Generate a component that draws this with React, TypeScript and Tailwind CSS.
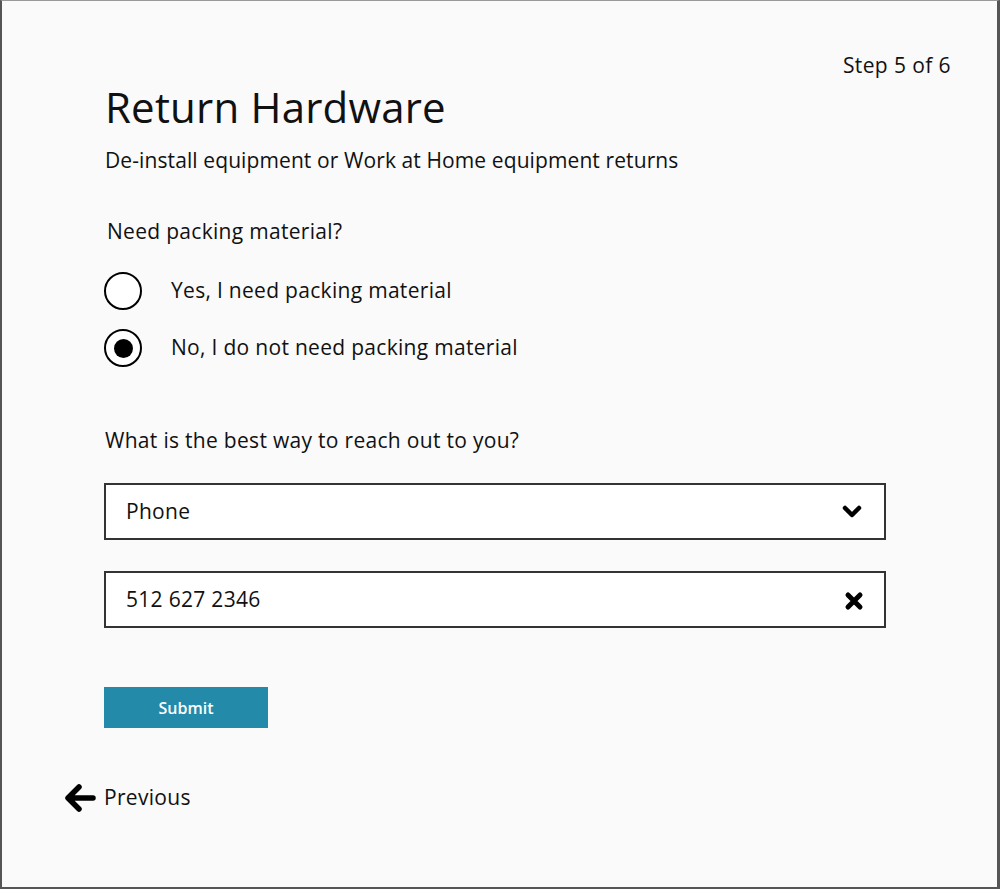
import React, { useState } from 'react'

const font = { fontFamily: '"Open Sans", Arial, sans-serif' }

const Radio = ({ checked, label, onClick }: { checked: boolean; label: string; onClick: () => void }) => (
    <button type="button" onClick={onClick} className="flex items-center gap-[29px] h-[40px]">
        <span className="w-[38px] h-[38px] rounded-full border-2 border-black flex items-center justify-center bg-white">
            {checked && <span className="w-[19px] h-[19px] rounded-full bg-black" />}
        </span>
        <span className="text-[21px] tracking-[0.3px] text-[#111]">{label}</span>
    </button>
)

export default function App() {
    const [packing, setPacking] = useState('no')

    return (
        <div style={font} className="w-[1000px] h-[889px] bg-[#fafafa] border-l-2 border-r-[3px] border-b-[2px] border-t border-l-[#555] border-r-[#555] border-b-[#555] border-t-[#999] flex flex-col text-[#111] tracking-[0.3px]">
            <div className="flex justify-end pr-[46px] pt-[51px]">
                <p className="text-[21px] leading-[26px] tracking-[0.4px]">Step 5 of 6</p>
            </div>

            <div className="pl-[103px] flex flex-col">
                <h1 className="text-[42px] leading-[48px] mt-[5px] tracking-[0.2px]">Return Hardware</h1>
                <p className="text-[21px] leading-[26px] mt-[16px] tracking-[0.1px]">De-install equipment or Work at Home equipment returns</p>

                <p className="text-[21px] leading-[26px] mt-[45px] pl-[2px]">Need packing material?</p>

                <div className="flex flex-col gap-[17px] mt-[27px] -ml-px">
                    <Radio checked={packing === 'yes'} label="Yes, I need packing material" onClick={() => setPacking('yes')} />
                    <Radio checked={packing === 'no'} label="No, I do not need packing material" onClick={() => setPacking('no')} />
                </div>

                <p className="text-[21px] leading-[26px] mt-[59px]">What is the best way to reach out to you?</p>

                {/* contact select */}
                <div className="mt-[30px] -ml-px w-[782px] h-[57px] border-2 border-[#333] bg-white flex items-center justify-between pl-[20px] pr-[22px]">
                    <span className="text-[21px]">Phone</span>
                    <svg width="20" height="14" viewBox="0 0 20 14">
                        <path d="M3 3 L10 10 L17 3" fill="none" stroke="#000" strokeWidth="4.5" strokeLinecap="round" strokeLinejoin="round" />
                    </svg>
                </div>

                {/* phone input */}
                <div className="mt-[31px] -ml-px w-[782px] h-[57px] border-2 border-[#333] bg-white flex items-center justify-between pl-[20px] pr-[20px]">
                    <span className="text-[21px]">512 627 2346</span>
                    <svg width="20" height="20" viewBox="0 0 20 20" className="mt-[3px]">
                        <path d="M4 4 L16 16 M16 4 L4 16" fill="none" stroke="#000" strokeWidth="5" strokeLinecap="round" />
                    </svg>
                </div>

                <button className="mt-[59px] -ml-px w-[164px] h-[41px] bg-[#238aa9] text-white text-[16px] font-semibold tracking-normal">
                    Submit
                </button>
            </div>

            <button className="flex items-center gap-[8px] ml-[62px] mt-[54px]">
                <svg width="32" height="30" viewBox="0 0 32 30">
                    <path d="M29 15 H5 M15 4 L4 15 L15 26" fill="none" stroke="#000" strokeWidth="5.5" strokeLinecap="round" strokeLinejoin="round" />
                </svg>
                <span className="text-[21px]">Previous</span>
            </button>
        </div>
    )
}
